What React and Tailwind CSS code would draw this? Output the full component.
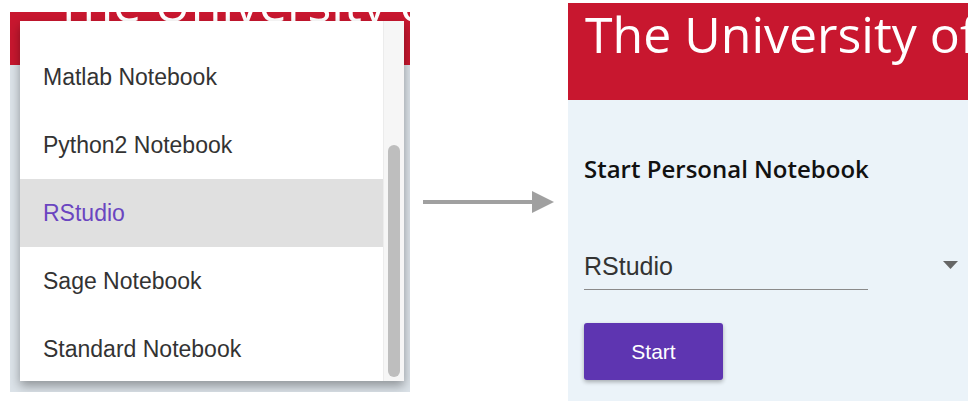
import React from 'react'

const items = ['Matlab Notebook', 'Python2 Notebook', 'RStudio', 'Sage Notebook', 'Standard Notebook']

const MenuShot = () => {
  return (
    <div className="relative mt-[12px] ml-[10px] w-[400px] h-[380px] overflow-hidden bg-[#dce3e9]">
      <div className="h-[53px] bg-[#c8172f] overflow-hidden">
        <div className="mt-[-34px] pl-[45px] text-[50px] leading-none text-white whitespace-nowrap font-['Open_Sans',sans-serif]">
          The University of
        </div>
      </div>

      {/* open select menu */}
      <div className="absolute left-[10px] top-[9px] w-[384px] h-[360px] bg-white flex shadow-[0_5px_10px_rgba(0,0,0,0.35)]">
        <div className="flex-1 pt-[22px] overflow-hidden">
          {items.map((item) => (
            <div
              key={item}
              className={`h-[68px] flex items-center pl-[23px] text-[23px] font-['Liberation_Sans',Arial,sans-serif] ${
                item === 'RStudio' ? 'bg-[#e0e0e0] text-[#6a45c0]' : 'text-[#333]'
              }`}
            >
              {item}
            </div>
          ))}
        </div>
        <div className="w-[21px] bg-[#f6f6f6] border-l border-[#ececec] pt-[124px]">
          <div className="ml-[4px] w-[12px] h-[232px] rounded-full bg-[#bebebe]" />
        </div>
      </div>
    </div>
  )
}

const Arrow = () => (
  <svg className="mt-[191px] ml-[13px]" width="131" height="22" viewBox="0 0 131 22">
    <rect x="0" y="9" width="112" height="4" fill="#a0a0a0" />
    <polygon points="109,0 131,11 109,22" fill="#a0a0a0" />
  </svg>
)

const StartPanel = () => {
  return (
    <div className="mt-[3px] ml-[14px] w-[400px] h-[398px] overflow-hidden bg-[#ebf3f9]">
      <div className="h-[97px] bg-[#c8172f] pt-[6px] pl-[17px]">
        <div className="text-[50px] leading-none text-white whitespace-nowrap font-['Open_Sans',sans-serif]">
          The University of Wisconsin
        </div>
      </div>
      <div className="pl-[16px]">
        <div className="pt-[57px] text-[24px] leading-none font-semibold text-[#111] font-['Open_Sans',sans-serif]">
          Start Personal Notebook
        </div>
        <div className="mt-[73px] flex items-start">
          <div className="w-[284px] pb-[10px] border-b border-[#8a8a8a] text-[25px] leading-none text-[#333] font-['Liberation_Sans',Arial,sans-serif]">
            RStudio
          </div>
          <svg className="ml-[75px] mt-[7px]" width="15" height="8" viewBox="0 0 15 8">
            <polygon points="0,0 15,0 7.5,8" fill="#666" />
          </svg>
        </div>
        <button className="mt-[33px] w-[139px] h-[57px] rounded-[3px] bg-[#5e35b1] text-white text-[21px] font-['Liberation_Sans',Arial,sans-serif] shadow-[0_2px_4px_rgba(0,0,0,0.3)]">
          Start
        </button>
      </div>
    </div>
  )
}

export default function App() {
  return (
    <div className="w-[975px] h-[404px] bg-white flex items-start overflow-hidden">
      <MenuShot />
      <Arrow />
      <StartPanel />
    </div>
  )
}
